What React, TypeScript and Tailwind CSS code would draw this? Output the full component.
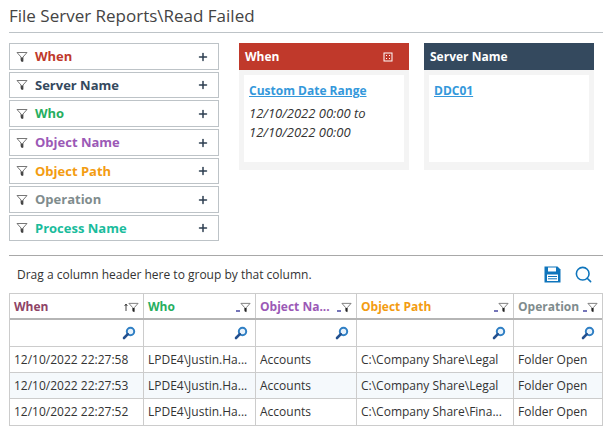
import { Plus, Search } from "lucide-react"

const filters = [
  { label: "When", color: "text-[#c0392b]", h: "h-[27px]" },
  { label: "Server Name", color: "text-[#34495e]", h: "h-[26px]" },
  { label: "Who", color: "text-[#27ae60]", h: "h-[27px]" },
  { label: "Object Name", color: "text-[#9b59b6]", h: "h-[27px]" },
  { label: "Object Path", color: "text-[#f39c12]", h: "h-[26px]" },
  { label: "Operation", color: "text-[#7f8c8d]", h: "h-[27px]" },
  { label: "Process Name", color: "text-[#1abc9c]", h: "h-[26px]" },
]

const columns = [
  { label: "When", color: "text-[#8e4466]", w: "w-[134px]", sorted: true },
  { label: "Who", color: "text-[#27ae60]", w: "w-[112px]" },
  { label: "Object Na...", color: "text-[#9b59b6]", w: "w-[101px]" },
  { label: "Object Path", color: "text-[#f39c12]", w: "w-[157px]" },
  { label: "Operation", color: "text-[#7f8c8d]", w: "flex-1" },
]

const rows = [
  ["12/10/2022 22:27:58", "LPDE4\\Justin.Ha...", "Accounts", "C:\\Company Share\\Legal", "Folder Open"],
  ["12/10/2022 22:27:53", "LPDE4\\Justin.Ha...", "Accounts", "C:\\Company Share\\Legal", "Folder Open"],
  ["12/10/2022 22:27:52", "LPDE4\\Justin.Ha...", "Accounts", "C:\\Company Share\\Fina...", "Folder Open"],
]

function FunnelIcon({ size = 12 }: { size?: number }) {
  return (
    <svg width={size} height={size} viewBox="0 0 12 12" className="shrink-0">
      <path d="M1 1.5h10L7 6v4.5L5 9.5V6z" fill="#fff" stroke="#777" strokeWidth="1" />
      <path d="M6 6.5v4" stroke="#222" strokeWidth="1.5" />
    </svg>
  )
}

function HeaderFilter({ sorted }: { sorted?: boolean }) {
  return (
    <span className="flex items-center shrink-0">
      {sorted ? (
        <svg width="4" height="8" viewBox="0 0 4 8">
          <path d="M2 1v7M.7 3 2 1l1.3 2" stroke="#444" strokeWidth="1" fill="none" />
        </svg>
      ) : (
        <svg width="4" height="9" viewBox="0 0 4 9">
          <path d="M0 8h4" stroke="#3a3a9a" strokeWidth="1.4" />
        </svg>
      )}
      <FunnelIcon size={11} />
    </span>
  )
}

function MagnifierIcon() {
  return (
    <svg width="14" height="14" viewBox="0 0 14 14">
      <circle cx="8.5" cy="5.5" r="3.7" fill="#e8f2fb" stroke="#2f7fc4" strokeWidth="2" />
      <path d="M5.8 8.2 2 12" stroke="#23508f" strokeWidth="2.6" strokeLinecap="round" />
    </svg>
  )
}

function SaveIcon() {
  return (
    <svg width="17" height="17" viewBox="0 0 17 17">
      <path d="M0.5 0.5h13l3 3v13h-16z" fill="#0f75bc" />
      <rect x="4" y="1.5" width="8" height="4" fill="#fff" />
      <rect x="3" y="8.5" width="11" height="6.5" fill="#fff" />
      <path d="M4 10.5h9M4 12.8h9" stroke="#0f75bc" strokeWidth="1" />
    </svg>
  )
}

function Card({ title, bar, icon, children }: { title: string; bar: string; icon?: boolean; children: React.ReactNode }) {
  return (
    <div className="w-[170px] h-[127px] bg-[#f4f4f4] flex flex-col">
      <div className={`h-[27px] ${bar} flex items-center justify-between pl-[6px] pr-[16px] text-white text-[12px] font-bold`}>
        <span>{title}</span>
        {icon && (
          <svg width="10" height="10" viewBox="0 0 10 10">
            <rect x="1" y="1" width="8" height="8" fill="none" stroke="#fff" strokeWidth="1" />
            <path d="M3 3.5h1M6 3.5h1M3 6.5h1M6 6.5h1" stroke="#fff" strokeWidth="1" />
          </svg>
        )}
      </div>
      <div className="mx-[5px] mt-[5px] h-[87px] bg-white px-[5px] pt-[7px]">{children}</div>
    </div>
  )
}

export default function App() {
  return (
    <div className="w-[612px] h-[430px] overflow-hidden bg-white text-[#333] font-['Open_Sans',sans-serif]">
      <div className="mx-[9px] w-[594px] h-[33px] border-b border-[#bdc3c7] text-[17px] leading-[32px] text-[#444]">
        File Server Reports\Read Failed
      </div>

      <div className="flex mt-[10px] ml-[9px]">
        <div className="w-[210px] flex flex-col gap-[2px]">
          {filters.map((f) => (
            <div key={f.label} className={`${f.h} border border-[#bdc3c7] flex items-center pl-[6px] pr-[9px]`}>
              <FunnelIcon />
              <span className={`ml-[7px] flex-1 text-[13px] font-bold pt-[1px] ${f.color}`}>{f.label}</span>
              <Plus size={12} strokeWidth={3} className="text-[#2c3e50]" />
            </div>
          ))}
        </div>

        <div className="ml-[20px]">
          <Card title="When" bar="bg-[#c0392b]" icon>
            <div className="text-[12px] font-bold text-[#3498db] underline leading-[17px]">Custom Date Range</div>
            <div className="mt-[5px] text-[13px] italic leading-[19px]">
              12/10/2022 00:00 to
              <br />
              12/10/2022 00:00
            </div>
          </Card>
        </div>
        <div className="ml-[15px]">
          <Card title="Server Name" bar="bg-[#34495e]">
            <div className="text-[12px] font-bold text-[#3498db] underline leading-[17px]">DDC01</div>
          </Card>
        </div>
      </div>

      <div className="mx-[9px] mt-[14px] border-t border-[#a8a8a8] h-[38px] flex items-center justify-between pr-[10px]">
        <span className="ml-[8px] text-[12px] text-[#333]">Drag a column header here to group by that column.</span>
        <span className="flex items-center gap-[13px] text-[#0f75bc]">
          <SaveIcon />
          <Search size={19} strokeWidth={2} />
        </span>
      </div>

      <div className="mx-[9px] border border-[#ccc] text-[12px]">
        <div className="flex h-[26px] border-b-2 border-[#b5b5b5]">
          {columns.map((c, i) => (
            <div key={c.label} className={`${c.w} ${i < 4 ? "border-r border-[#ccc]" : ""} flex items-center justify-between pl-[4px] pr-[4px] pt-[2px]`}>
              <span className={`font-bold ${c.color}`}>{c.label}</span>
              <HeaderFilter sorted={c.sorted} />
            </div>
          ))}
        </div>
        <div className="flex h-[27px] border-b border-[#ccc]">
          {columns.map((c, i) => (
            <div key={c.label} className={`${c.w} ${i < 4 ? "border-r border-[#ccc]" : ""} flex items-center justify-end pr-[7px]`}>
              <MagnifierIcon />
            </div>
          ))}
        </div>
        {rows.map((r, ri) => (
          <div key={ri} className={`flex h-[26px] ${ri < 2 ? "border-b border-[#ccc]" : ""} ${ri === 1 ? "bg-[#f5f9fc]" : ""}`}>
            {r.map((v, i) => (
              <div key={i} className={`${columns[i].w} ${i < 4 ? "border-r border-[#ccc]" : ""} flex items-center pl-[4px] whitespace-nowrap overflow-hidden`}>
                {v}
              </div>
            ))}
          </div>
        ))}
      </div>
    </div>
  )
}
